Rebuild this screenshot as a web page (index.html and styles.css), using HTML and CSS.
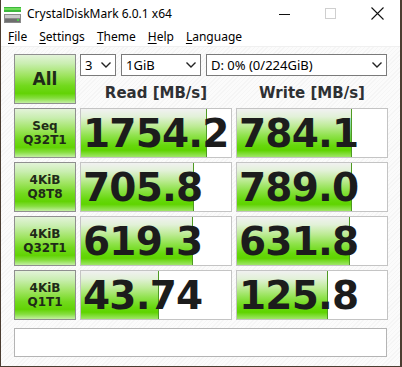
FILE: index.html
```html
<!DOCTYPE html>
<html lang="en">
<head>
	<meta charset="UTF-8">
	<title>CrystalDiskMark 6.0.1 x64</title>
	<link rel="stylesheet" href="styles.css">
</head>
<body>
	<div class="window">
		<div class="titlebar">
			<svg class="app-icon" width="17" height="16" viewBox="0 0 17 16">
				<rect x="0" y="0" width="17" height="5" fill="#3cb83c"/>
				<rect x="0" y="1" width="17" height="2" fill="#6fdc5a"/>
				<rect x="0" y="7" width="17" height="9" fill="#8a8a8a"/>
				<rect x="1" y="8" width="15" height="3" fill="#c9c9c9"/>
				<rect x="1" y="12" width="15" height="3" fill="#6e6e6e"/>
				<rect x="13" y="12" width="2" height="2" fill="#4ad04a"/>
			</svg>
			<span class="title">CrystalDiskMark 6.0.1 x64</span>
			<div class="controls">
				<span class="ctl"><svg width="12" height="12" viewBox="0 0 12 12"><line x1="0" y1="6.5" x2="11" y2="6.5" stroke="#111" stroke-width="1"/></svg></span>
				<span class="ctl"><svg width="12" height="12" viewBox="0 0 12 12"><rect x="0.5" y="0.5" width="10" height="10" fill="none" stroke="#cfcfcf" stroke-width="1"/></svg></span>
				<span class="ctl"><svg width="13" height="13" viewBox="0 0 13 13"><path d="M0.5 0.5 L12.5 12.5 M12.5 0.5 L0.5 12.5" stroke="#111" stroke-width="1.1" fill="none"/></svg></span>
			</div>
		</div>
		<div class="menubar">
			<span><u>F</u>ile</span>
			<span><u>S</u>ettings</span>
			<span><u>T</u>heme</span>
			<span><u>H</u>elp</span>
			<span><u>L</u>anguage</span>
		</div>
		<div class="main">
			<div class="grid">
				<div class="btn btn-all">All</div>
				<div class="head">
					<div class="selects">
						<div class="select sel-count">3<svg width="10" height="6" viewBox="0 0 10 6"><polyline points="0.5,0.5 5,5 9.5,0.5" fill="none" stroke="#222" stroke-width="1.4"/></svg></div>
						<div class="select sel-size">1GiB<svg width="10" height="6" viewBox="0 0 10 6"><polyline points="0.5,0.5 5,5 9.5,0.5" fill="none" stroke="#222" stroke-width="1.4"/></svg></div>
						<div class="select sel-drive">D: 0% (0/224GiB)<svg width="10" height="6" viewBox="0 0 10 6"><polyline points="0.5,0.5 5,5 9.5,0.5" fill="none" stroke="#222" stroke-width="1.4"/></svg></div>
					</div>
					<div class="cols">
						<span>Read [MB/s]</span>
						<span>Write [MB/s]</span>
					</div>
				</div>

				<div class="btn">Seq<br>Q32T1</div>
				<div class="result" style="--w:126px">1754.2</div>
				<div class="result" style="--w:115px">784.1</div>

				<div class="btn">4KiB<br>Q8T8</div>
				<div class="result" style="--w:113px">705.8</div>
				<div class="result" style="--w:115px">789.0</div>

				<div class="btn">4KiB<br>Q32T1</div>
				<div class="result" style="--w:112px">619.3</div>
				<div class="result" style="--w:113px">631.8</div>

				<div class="btn">4KiB<br>Q1T1</div>
				<div class="result" style="--w:78px">43.74</div>
				<div class="result" style="--w:91px">125.8</div>
			</div>
			<div class="status"></div>
		</div>
	</div>
</body>
</html>
```

FILE: styles.css
```css
*{
	margin:0;
	padding:0;
	box-sizing:border-box;
}
body{
	width:402px;
	height:367px;
	overflow:hidden;
	background:#fff;
	font-family:"Noto Sans","Open Sans",sans-serif;
}
.window{
	width:402px;
	height:367px;
	border:1px solid #4b3d31;
	border-top:none;
	border-right-width:2px;
	display:flex;
	flex-direction:column;
	background:#f9f9f9;
}
.titlebar{
	height:27px;
	background:#fff;
	display:flex;
	align-items:center;
	padding-left:3px;
}
.app-icon{
	margin-top:2px;
}
.title{
	margin-left:6px;
	font-size:12px;
	color:#000;
}
.controls{
	margin-left:auto;
	display:flex;
	height:100%;
}
.ctl{
	width:46px;
	display:flex;
	align-items:center;
	justify-content:center;
}
.menubar{
	height:20px;
	background:#fff;
	border-bottom:1px solid #f0f0f0;
	display:flex;
	align-items:center;
	gap:12px;
	padding-left:7px;
	font-size:12px;
	color:#000;
}
.menubar u{
	text-decoration:underline;
	text-underline-offset:2px;
}
.main{
	flex:1;
	padding:7px 12px 8px 13px;
	display:flex;
	flex-direction:column;
	gap:8px;
	background:repeating-linear-gradient(135deg,#fbfbfb 0,#fbfbfb 2px,#f5f5f5 2px,#f5f5f5 3px);
}
.grid{
	display:grid;
	grid-template-columns:62px 152px 152px;
	grid-auto-rows:50px;
	gap:4px;
}
.btn{
	border:1px solid #8f8f8f;
	background:linear-gradient(to bottom,#e3f3d9 0%,#c9eeb0 18%,#9fe461 42%,#72d91d 64%,#62d305 80%,#86de40 90%,#c4efa4 100%);
	display:flex;
	align-items:center;
	justify-content:center;
	text-align:center;
	font-family:"DejaVu Sans",Verdana,sans-serif;
	font-weight:bold;
	font-size:12px;
	line-height:14px;
	color:#1f2a18;
}
.btn-all{
	font-size:17px;
}
.head{
	grid-column:2 / 4;
	display:flex;
	flex-direction:column;
}
.selects{
	display:flex;
	gap:5px;
	height:22px;
}
.select{
	border:1px solid #7a7a7a;
	background:#fff;
	display:flex;
	align-items:center;
	justify-content:space-between;
	padding:0 4px 0 4px;
	font-size:13px;
	color:#000;
}
.sel-count{
	width:36px;
}
.sel-size{
	width:80px;
}
.sel-drive{
	width:181px;
}
.cols{
	flex:1;
	display:grid;
	grid-template-columns:152px 152px;
	gap:4px;
	align-items:center;
	text-align:center;
	font-family:"DejaVu Sans",Verdana,sans-serif;
	font-weight:bold;
	font-size:15px;
	color:#2e3033;
	padding-top:5px;
}
.result{
	border:1px solid #c4c4c4;
	background-color:#fff;
	background-image:
		linear-gradient(#4e9a22,#4e9a22),
		linear-gradient(to bottom,#f1f1f1 0%,#e2f1d8 16%,#bdeb95 36%,#8ee24a 56%,#66d80c 76%,#5fd400 86%,#9fe668 100%);
	background-repeat:no-repeat;
	background-size:1px 100%,var(--w) 100%;
	background-position:calc(var(--w) - 1px) 0,0 0;
	display:flex;
	align-items:center;
	padding-left:2px;
	font-family:"DejaVu Sans",Verdana,sans-serif;
	font-weight:bold;
	font-size:39px;
	letter-spacing:-0.8px;
	color:#1c1c1c;
	white-space:nowrap;
	overflow:hidden;
}
.status{
	height:29px;
	border:1px solid #b4b4b4;
	background:#fff;
	margin-right:1px;
}
```
